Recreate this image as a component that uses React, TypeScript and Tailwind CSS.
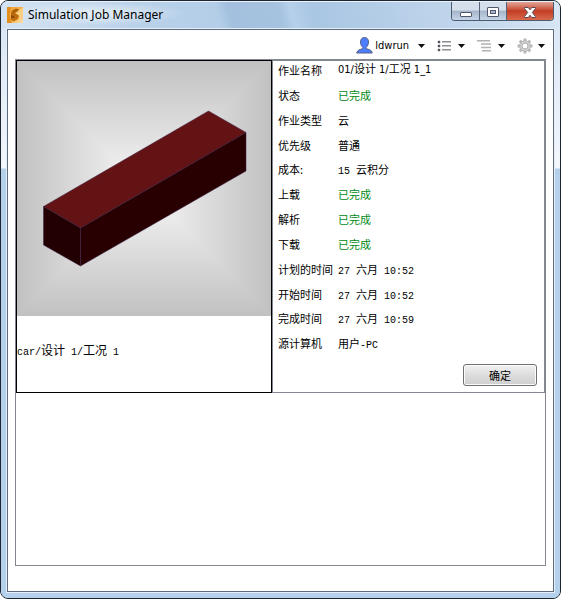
import * as React from 'react';
import clsx from 'clsx';

interface Detail {
  label: string;
  value: string;
  done?: boolean;
  sans?: boolean;
}

const details: Detail[] = [
  { label: '作业名称', value: '01/设计 1/工况 1_1', sans: true },
  { label: '状态', value: '已完成', done: true },
  { label: '作业类型', value: '云' },
  { label: '优先级', value: '普通' },
  { label: '成本:', value: '15 云积分' },
  { label: '上载', value: '已完成', done: true },
  { label: '解析', value: '已完成', done: true },
  { label: '下载', value: '已完成', done: true },
  { label: '计划的时间', value: '27 六月 10:52' },
  { label: '开始时间', value: '27 六月 10:52' },
  { label: '完成时间', value: '27 六月 10:59' },
  { label: '源计算机', value: '用户-PC' },
];

// Latin runs are set in a 6px wide mono face next to the CJK glyphs
function MixedText({ text }: { text: string }) {
  return (
    <>
      {text.split(/([\u4e00-\u9fff]+)/).map((part, i) =>
        i % 2 === 0 ? (
          <span key={i} className="text-[10px] font-['Liberation_Mono',monospace]">
            {part}
          </span>
        ) : (
          part
        )
      )}
    </>
  );
}

function AppIcon() {
  return (
    <svg width="16" height="16" viewBox="0 0 16 16" aria-hidden="true">
      <defs>
        <linearGradient id="app-bg" x1="0" y1="0" x2="1" y2="1">
          <stop offset="0" stopColor="#f0a43a" />
          <stop offset="0.5" stopColor="#f6b24a" />
          <stop offset="1" stopColor="#fde3b0" />
        </linearGradient>
        <linearGradient id="app-mark" x1="0" y1="0" x2="0" y2="1">
          <stop offset="0" stopColor="#a85c08" />
          <stop offset="1" stopColor="#c9750c" />
        </linearGradient>
      </defs>
      <rect width="16" height="16" fill="url(#app-bg)" />
      <path d="M0 0h4L2.500 8 5 16H0z" fill="#e48f1c" />
      <path d="M4.500 4 9 1.500l3.500 1L9.500 5.500 8 6l4 2.500-1 3.500-4 2.500-3-1.500V11l3 .5L8.500 10 4 7.500z" fill="url(#app-mark)" />
      <path d="M4 7.500 8.500 10 7 11.500 4 11z" fill="#8a4805" />
      <path d="M12.500 2.500 16 1v8l-3 2-1-2.500L8 6l1.500-.5z" fill="#fbcf80" />
    </svg>
  );
}

function UserIcon() {
  return (
    <svg width="17" height="17" viewBox="0 0 17 17" aria-hidden="true">
      <path
        d="M8.500.5C5.800.5 4.500 2.400 4.500 5c0 2.300.9 4.200 2.300 5.300v1.400C4.500 12.300 1 13 .7 16h15.600c-.3-3-3.800-3.700-6.100-4.300v-1.400c1.400-1.100 2.300-3 2.300-5.300 0-2.600-1.300-4.500-4-4.500z"
        fill="#4f7dff"
        stroke="#55607f"
      />
    </svg>
  );
}

function ListIcon() {
  return (
    <svg width="14" height="12" viewBox="0 0 14 12" aria-hidden="true">
      <path d="M1 1h2v2H1zM1 5h2v2H1zM1 9h2v2H1z" fill="#3e3e48" stroke="#6c6c76" strokeWidth="0.500" />
      <path d="M5 1h9v1.500H5zM5 5h9v1.500H5zM5 9h9v1.500H5z" fill="#8f8f93" />
    </svg>
  );
}

function TreeIcon() {
  return (
    <svg width="15" height="13" viewBox="0 0 15 13" aria-hidden="true">
      <path d="M0 1h13v1.500H0zM4 4.300h10v1.500H4zM4 7.700h10v1.500H4zM5 11h9v1.500H5z" fill="#b2b2b2" />
    </svg>
  );
}

function GearIcon() {
  return (
    <svg width="16" height="16" viewBox="-8 -8 16 16" aria-hidden="true">
      {[0, 45, 90, 135].map((a) => (
        <rect key={a} x="-1.500" y="-7.500" width="3" height="15" rx="0.500" fill="#b8b8b8" transform={`rotate(${a})`} />
      ))}
      <circle r="5.300" fill="#d2d2d2" stroke="#b0b0b0" strokeWidth="0.800" />
      <circle r="3" fill="#fff" stroke="#adadad" />
    </svg>
  );
}

interface MenuButtonProps {
  label: string;
  text?: string;
  children: React.ReactNode;
}

function MenuButton({ label, text, children }: MenuButtonProps) {
  return (
    <button type="button" aria-label={label} className={clsx('flex items-center justify-between', !text && 'w-7')}>
      {children}
      {text && (
        <span className="pl-0.5 pr-[9px] text-[11px] leading-4 font-['DejaVu_Sans_Condensed',sans-serif]">{text}</span>
      )}
      <svg width="7" height="4" viewBox="0 0 7 4" aria-hidden="true">
        <path d="M0 0h7L3.500 4z" fill="#111" />
      </svg>
    </button>
  );
}

function WindowControls() {
  return (
    <div className="flex h-[19px] overflow-hidden rounded-b border border-t-0 border-[#4d5b6e]">
      <button
        type="button"
        aria-label="Minimize"
        className="flex w-7 items-center justify-center border-r border-[#56657a] bg-linear-to-b from-[#d5dfeb] from-45% via-[#a6b5ca] via-50% to-[#c5d5e8]"
      >
        <svg width="12" height="5" viewBox="0 0 12 5" className="mt-1.5" aria-hidden="true">
          <rect x="0.500" y="0.500" width="11" height="4" rx="0.500" fill="#fff" stroke="#535666" />
        </svg>
      </button>
      <button
        type="button"
        aria-label="Maximize"
        className="flex w-[27px] items-center justify-center border-r border-[#56657a] bg-linear-to-b from-[#d5dfeb] from-45% via-[#a6b5ca] via-50% to-[#c5d5e8]"
      >
        <svg width="12" height="10" viewBox="0 0 12 10" className="mt-0.5" aria-hidden="true">
          <rect x="0.500" y="0.500" width="11" height="9" rx="0.500" fill="#fff" stroke="#535666" />
          <rect x="3.500" y="3.500" width="5" height="3" fill="#a9bad0" stroke="#535666" />
        </svg>
      </button>
      <button
        type="button"
        aria-label="Close"
        className="flex w-[46px] items-center justify-center bg-linear-to-b from-[#e3a497] from-0% via-[#c23d25] via-50% to-[#d9694a]"
      >
        <svg width="12" height="11" viewBox="0 0 12 11" className="mt-0.5" aria-hidden="true">
          <path
            d="M.5.5h3.800L6 2.800 7.700.5h3.800v1L8.300 5.500l3.200 4v1H7.700L6 8.200 4.300 10.500H.5v-1l3.200-4L.5 1.500z"
            fill="#fff"
            stroke="#5b4a55"
          />
        </svg>
      </button>
    </div>
  );
}

function Preview() {
  return (
    <svg viewBox="0 0 254 255" className="block w-full" role="img" aria-label="car">
      <defs>
        <linearGradient id="fade-t" x1="0" y1="0" x2="0" y2="1">
          <stop offset="0" stopColor="#c1c1c1" />
          <stop offset="1" stopColor="#f7f7f7" />
        </linearGradient>
        <linearGradient id="fade-b" x1="0" y1="1" x2="0" y2="0">
          <stop offset="0" stopColor="#c1c1c1" />
          <stop offset="1" stopColor="#f7f7f7" />
        </linearGradient>
        <linearGradient id="fade-l" x1="0" y1="0" x2="1" y2="0">
          <stop offset="0" stopColor="#c1c1c1" />
          <stop offset="1" stopColor="#f7f7f7" />
        </linearGradient>
        <linearGradient id="fade-r" x1="1" y1="0" x2="0" y2="0">
          <stop offset="0" stopColor="#c1c1c1" />
          <stop offset="1" stopColor="#f7f7f7" />
        </linearGradient>
      </defs>
      <g shapeRendering="crispEdges">
        <path d="M0 0h254L127 127.500z" fill="url(#fade-t)" />
        <path d="M0 255h254L127 127.500z" fill="url(#fade-b)" />
        <path d="M0 0v255l127-127.500z" fill="url(#fade-l)" />
        <path d="M254 0v255L127 127.500z" fill="url(#fade-r)" />
      </g>
      <g stroke="#3c2048" strokeWidth="0.500" strokeLinejoin="round">
        <path d="M26.500 145.500 191.500 50 229 71.500 63.500 167z" fill="#641315" />
        <path d="M26.500 145.500 63.500 167v38L26.500 184z" fill="#220001" />
        <path d="M63.500 167 229 71.500V110L63.500 205z" fill="#290001" />
      </g>
    </svg>
  );
}

export default function App() {
  return (
    <div className="flex min-h-screen flex-col overflow-hidden rounded-lg border border-[#1d2530] bg-[#b5d0ea] text-black font-['Noto_Sans_CJK_SC',sans-serif]">
      <header className="flex h-7 items-start justify-between border-t border-[#eaf3fc] bg-[linear-gradient(75deg,#d5e4f3_0%,#b9d1e9_25%,#b4cee8_39%,#a3c0de_41%,#a5c2df_50%,#b6d0ea_52%,#a9c6e3_56%,#c4d8ed_85%,#d9e7f5_100%)] pl-1.5 pr-1.5">
        <div className="flex items-center gap-[5px] bg-radial from-white/60 to-transparent to-70% pt-[3px] pr-6">
          <AppIcon />
          <h1 className="text-xs leading-5 font-['Noto_Sans',sans-serif]">Simulation Job Manager</h1>
        </div>
        <WindowControls />
      </header>

      <div className="flex grow flex-col bg-linear-to-b from-[#dbe7f5] from-0% via-[#f3f7fd] via-[139px] to-[#b5d0ea] to-[140px] px-1.5 pb-1.5">
        <main className="flex grow flex-col border border-[#5d6b7c] bg-white px-[7px] pb-[25px] outline outline-[#e4effa]">
          <div className="flex h-[29px] items-center justify-end gap-3 pt-0.5 pr-px" role="toolbar" aria-label="Job tools">
            <MenuButton label="Account ldwrun" text="ldwrun">
              <UserIcon />
            </MenuButton>
            <MenuButton label="List view">
              <ListIcon />
            </MenuButton>
            <MenuButton label="Sort order">
              <TreeIcon />
            </MenuButton>
            <MenuButton label="Settings">
              <GearIcon />
            </MenuButton>
          </div>

          <div className="grow border border-[#828790]">
            <div className="flex">
              <section className="flex w-64 shrink-0 flex-col border border-black">
                <Preview />
                <p className="flex grow items-center pb-1.5 text-xs whitespace-pre">
                  <span>
                    <MixedText text="car/设计 1/工况 1" />
                  </span>
                </p>
              </section>

              <section className="flex min-w-0 grow flex-col border border-[#828790] pl-[5px] pr-[7px] pb-1.5">
                <dl className="grid h-[298px] grid-rows-12 text-[11px]">
                  {details.map((d) => (
                    <div key={d.label} className="flex items-start leading-[18px]">
                      <dt className="w-[60px] shrink-0 whitespace-nowrap">{d.label}</dt>
                      <dd
                        className={clsx(
                          'whitespace-pre',
                          d.done && 'text-[#008a17]',
                          d.sans && "font-['DejaVu_Sans_Condensed','Noto_Sans_CJK_SC',sans-serif]"
                        )}
                      >
                        {d.sans ? d.value : <MixedText text={d.value} />}
                      </dd>
                    </div>
                  ))}
                </dl>
                <button
                  type="button"
                  className="mt-[5px] h-[22px] w-[74px] self-end rounded-[3px] border border-[#707070] bg-linear-to-b from-[#f2f2f2] from-0% via-[#dddddd] via-50% to-[#cfcfcf] text-[11px] leading-4 shadow-[inset_0_0_0_1px_#fbfbfb]"
                >
                  确定
                </button>
              </section>
            </div>
          </div>
        </main>
      </div>
    </div>
  );
}
